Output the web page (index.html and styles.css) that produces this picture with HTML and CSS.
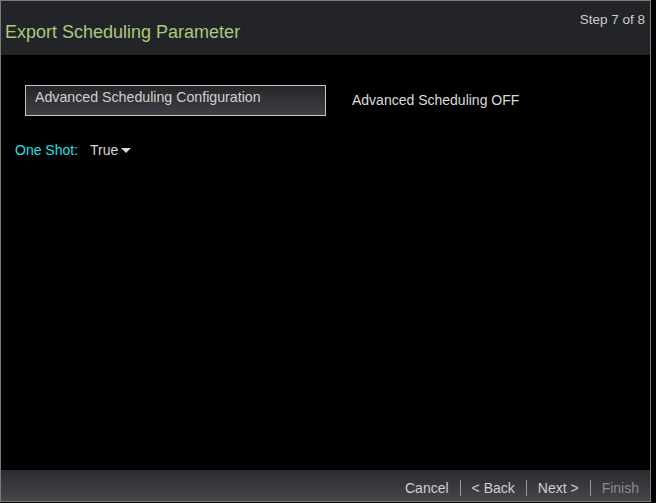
FILE: index.html
```html
<!DOCTYPE html>
<html>
<head>
<meta charset="utf-8">
<link rel="stylesheet" href="styles.css">
</head>
<body>
<div class="window">
  <div class="header">
    <div class="title">Export Scheduling Parameter</div>
    <div class="step">Step 7 of 8</div>
  </div>
  <div class="content">
    <div class="row-adv">
      <div class="adv-btn">Advanced Scheduling Configuration</div>
      <div class="adv-state">Advanced Scheduling OFF</div>
    </div>
    <div class="row-shot">
      <span class="shot-label">One Shot:</span>
      <span class="shot-value">True<span class="caret"></span></span>
    </div>
  </div>
  <div class="footer">
    <span class="link">Cancel</span>
    <span class="sep"></span>
    <span class="link">&lt; Back</span>
    <span class="sep"></span>
    <span class="link">Next &gt;</span>
    <span class="sep"></span>
    <span class="link disabled">Finish</span>
  </div>
</div>
</body>
</html>
```

FILE: styles.css
```css
html, body {
  margin: 0;
  padding: 0;
  background: #000;
}
body {
  width: 656px;
  height: 503px;
  font-family: "Liberation Sans", Arial, sans-serif;
  overflow: hidden;
}
.window {
  width: 649px;
  height: 500px;
  border: 1px solid #7a7a7a;
  display: flex;
  flex-direction: column;
  background: #000;
}
.header {
  height: 54px;
  background: #232428;
  display: flex;
  justify-content: space-between;
}
.title {
  color: #a9c97e;
  font-size: 18px;
  padding: 21px 0 0 4px;
}
.step {
  color: #cfcfcf;
  font-size: 13.5px;
  padding: 11px 5px 0 0;
}
.content {
  flex: 1;
  padding: 30px 0 0 0;
}
.row-adv {
  display: flex;
  align-items: flex-start;
}
.adv-btn {
  margin-left: 24px;
  width: 290px;
  height: 26px;
  padding: 3px 0 0 9px;
  border: 1px solid #c4c4c4;
  background: linear-gradient(#26262a, #3e3e44);
  color: #cfcfcf;
  font-size: 14.2px;
}
.adv-state {
  margin-left: 26px;
  margin-top: 7px;
  color: #dcdcdc;
  font-size: 14px;
}
.row-shot {
  margin-top: 26px;
  padding-left: 14px;
  font-size: 14px;
  display: flex;
  align-items: center;
}
.shot-label {
  color: #1fe0e6;
}
.shot-value {
  color: #d8d8d8;
  margin-left: 12px;
  display: flex;
  align-items: center;
}
.caret {
  display: inline-block;
  width: 0;
  height: 0;
  margin-left: 3px;
  margin-top: 1px;
  border-left: 5px solid transparent;
  border-right: 5px solid transparent;
  border-top: 5px solid #d8d8d8;
}
.footer {
  height: 31px;
  background: linear-gradient(#2b2b30, #46464d);
  display: flex;
  justify-content: flex-end;
  align-items: center;
  padding-right: 11px;
  font-size: 14px;
  padding-top: 4px;
  box-sizing: border-box;
}
.link {
  color: #cfcfcf;
}
.link.disabled {
  color: #8a8a8e;
}
.sep {
  width: 1px;
  height: 16px;
  background: #9a9a9e;
  margin: 0 11px;
}
```
